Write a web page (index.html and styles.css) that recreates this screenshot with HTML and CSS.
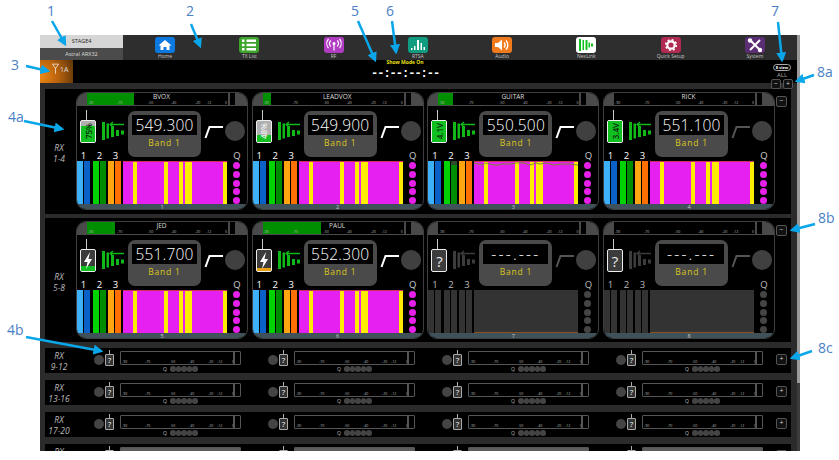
FILE: index.html
```html
<!DOCTYPE html>
<html lang="en">

<head>
    <meta charset="UTF-8">
    <title>Wireless Workbench receivers</title>
    <link rel="stylesheet" href="styles.css">
</head>

<body>
    <svg class="sprite" xmlns="http://www.w3.org/2000/svg">
        <symbol id="rf" viewBox="0 0 22 20">
            <path d="M0 1h3v18H0zM4.500 2.500h2.500v15H4.500zM9 5h3v11H9zM14 9h3v6h-3zM19 9.500h3v4h-3z" fill="currentColor" />
            <path d="M8 3.500h14M11 1 8 3.500 11 6" fill="none" stroke="currentColor" stroke-width="1.300" />
        </symbol>
        <symbol id="squelch" viewBox="0 0 20 14">
            <path d="M1.500 13 5.500 2H19" fill="none" stroke="currentColor" stroke-width="2" />
        </symbol>
        <symbol id="bolt" viewBox="0 0 14 21">
            <path d="M9 2 3 12h3.500L5 19l6-10H7.500z" fill="#fff" />
        </symbol>
    </svg>

    <div class="app">
        <div class="app-main">
            <header class="topbar">
                <div class="device-name">
                    <div class="stage">STAGE4</div>
                    <div class="model">Astral ARX32</div>
                </div>
                <nav class="nav">
                    <a class="nav-item">
                        <svg class="nav-icon home" viewBox="0 0 20 16"><path d="M10 3l6.500 5.500H14.500V13H11.500V10H8.500V13H5.500V8.500H3.500z" fill="#fff" /></svg>
                        <span>Home</span>
                    </a>
                    <a class="nav-item">
                        <svg class="nav-icon txlist" viewBox="0 0 20 16"><path d="M3 2.500h2.500v2.500H3zM3 6.800h2.500v2.500H3zM3 11h2.500v2.500H3zM7.500 2.500H17v2.500H7.500zM7.500 6.800H17v2.500H7.500zM7.500 11H17v2.500H7.500z" fill="#fff" /></svg>
                        <span>TX List</span>
                    </a>
                    <a class="nav-item">
                        <svg class="nav-icon rf-tab" viewBox="0 0 20 16"><circle cx="10" cy="6.500" r="1.500" fill="#fff" /><path d="M10 7v6.500M6.800 3.500a4.500 4.500 0 0 0 0 6M13.200 3.500a4.500 4.500 0 0 1 0 6M4.500 2a7 7 0 0 0 0 9M15.500 2a7 7 0 0 1 0 9" fill="none" stroke="#fff" stroke-width="1.200" /></svg>
                        <span>RF</span>
                    </a>
                    <a class="nav-item">
                        <svg class="nav-icon rtsa" viewBox="0 0 20 16"><path d="M3 13h1.500v-2H3zM6 13h1.500V9H6zM9 13h2V3H9zM12.500 13H14V6h-1.500zM15.500 13H17v-3h-1.500z" fill="#fff" /></svg>
                        <span>RTSA</span>
                    </a>
                    <a class="nav-item">
                        <svg class="nav-icon audio" viewBox="0 0 20 16"><path d="M3 6h3l4-3.500v11L6 10H3z" fill="#fff" /><path d="M12 5.500a3.500 3.500 0 0 1 0 5M14 3.500a6.500 6.500 0 0 1 0 9" fill="none" stroke="#fff" stroke-width="1.400" /></svg>
                        <span>Audio</span>
                    </a>
                    <a class="nav-item">
                        <svg class="nav-icon nexlink" viewBox="0 0 20 16"><path d="M3 2h2v12H3zM6.500 3h1.500v10H6.500zM9.500 3h2v10h-2zM12.500 5.500H14v5h-1.500zM15 6.500h2v3h-2z" fill="#12c01e" /></svg>
                        <span>NexLink</span>
                    </a>
                    <a class="nav-item">
                        <svg class="nav-icon setup" viewBox="0 0 20 16"><circle cx="10" cy="8" r="3.700" fill="none" stroke="#fff" stroke-width="2.200" /><circle cx="10" cy="8" r="5.300" fill="none" stroke="#fff" stroke-width="1.600" stroke-dasharray="2 2.160" /></svg>
                        <span>Quick Setup</span>
                    </a>
                    <a class="nav-item">
                        <svg class="nav-icon system" viewBox="0 0 20 16"><path d="M5 3l10 10M15 3 5 13" fill="none" stroke="#fff" stroke-width="2" /><circle cx="5" cy="3.500" r="2.200" fill="#fff" /><circle cx="15" cy="13" r="2.200" fill="#fff" /></svg>
                        <span>System</span>
                    </a>
                </nav>
            </header>

            <div class="statusbar">
                <div class="filter">
                    <svg class="filter-icon" viewBox="0 0 8 12"><path d="M.5 1h7L4 6zM4 6v6" fill="none" stroke="#fff" stroke-width=".8" /></svg>
                    <span>1A</span>
                </div>
                <div class="clock-box">
                    <div class="show-mode">Show Mode On</div>
                    <div class="clock">--:--:--:--</div>
                </div>
                <div class="view-box">
                    <div class="view-pill">8 view</div>
                    <div class="view-all">ALL</div>
                </div>
                <div class="zoom-btns">
                    <div class="toggle">&minus;</div>
                    <div class="toggle">+</div>
                </div>
            </div>

            <main class="content">
                <section class="group">
                    <div class="rx-label">RX<br>1-4</div>
                    <div class="cards">
                        <article class="card">
                            <div class="head">
                                <div class="meter"><div class="level" style="width: 47px"></div><div class="name">BVOX</div><div class="scale"><span>-90</span><span>-70</span><span>-50</span><span>-40</span><span>-20</span><span>-12</span><span>0</span></div></div>
                                <div class="peak"></div>
                            </div>
                            <div class="top">
                                <div class="dev"><div class="fill" style="height: 75%"></div><span class="dev-text">75%</span></div>
                                <svg class="rf on"><use href="#rf" /></svg>
                                <div class="freq"><div class="mhz">549.300</div><div class="band">Band 1</div></div>
                                <svg class="sq"><use href="#squelch" /></svg>
                                <div class="knob"></div>
                            </div>
                            <div class="labels"><span>1</span><span>2</span><span>3</span><span class="q">Q</span></div>
                            <div class="chans">
                                <div class="bar sky"></div><div class="bar blue"></div>
                                <div class="bar lime second"></div><div class="bar green"></div>
                                <div class="bar amber third"></div><div class="bar orange"></div>
                                <div class="mag"></div>
                                <div class="dots"><i></i><i></i><i></i><i></i><i></i></div>
                            </div>
                            <div class="foot">1</div>
                        </article>
                        <article class="card">
                            <div class="head">
                                <div class="meter"><div class="level" style="width: 8px"></div><div class="name">LEADVOX</div><div class="scale"><span>-90</span><span>-70</span><span>-50</span><span>-40</span><span>-20</span><span>-12</span><span>0</span></div></div>
                                <div class="peak"></div>
                            </div>
                            <div class="top">
                                <div class="dev"><div class="fill" style="height: 35%"></div><span class="dev-text pale">48%</span></div>
                                <svg class="rf on"><use href="#rf" /></svg>
                                <div class="freq"><div class="mhz">549.900</div><div class="band">Band 1</div></div>
                                <svg class="sq"><use href="#squelch" /></svg>
                                <div class="knob"></div>
                            </div>
                            <div class="labels"><span>1</span><span>2</span><span>3</span><span class="q">Q</span></div>
                            <div class="chans">
                                <div class="bar sky"></div><div class="bar blue"></div>
                                <div class="bar lime second"></div><div class="bar green"></div>
                                <div class="bar amber third"></div><div class="bar orange"></div>
                                <div class="mag"></div>
                                <div class="dots"><i></i><i></i><i></i><i></i><i></i></div>
                            </div>
                            <div class="foot">2</div>
                        </article>
                        <article class="card">
                            <div class="head">
                                <div class="meter"><div class="level" style="width: 15px"></div><div class="name">GUITAR</div><div class="scale"><span>-90</span><span>-70</span><span>-50</span><span>-40</span><span>-20</span><span>-12</span><span>0</span></div></div>
                                <div class="peak"></div>
                            </div>
                            <div class="top">
                                <div class="dev"><div class="fill" style="height: 100%"></div><span class="dev-text">4.1V</span></div>
                                <svg class="rf on"><use href="#rf" /></svg>
                                <div class="freq"><div class="mhz">550.500</div><div class="band">Band 1</div></div>
                                <svg class="sq"><use href="#squelch" /></svg>
                                <div class="knob"></div>
                            </div>
                            <div class="labels"><span>1</span><span>2</span><span>3</span><span class="q">Q</span></div>
                            <div class="chans">
                                <div class="bar sky"></div><div class="bar blue"></div>
                                <div class="bar lime second"></div><div class="bar green capped"></div>
                                <div class="bar amber third"></div><div class="bar orange"></div>
                                <div class="mag">
                                    <svg class="trace" viewBox="0 0 104 5"><polyline points="0,1 4,2 8,3 12,1 16,2 20,3 24,3 28,2 36,2 42,1 50,1 56,3 62,1 66,2 72,1 80,3 88,2 96,2 104,3" fill="none" stroke="#7d8a2a" stroke-width="1" /></svg>
                                </div>
                                <div class="dots"><i></i><i></i><i></i><i></i><i></i></div>
                            </div>
                            <div class="foot">3</div>
                        </article>
                        <article class="card">
                            <div class="head">
                                <div class="meter"><div class="name">RICK</div><div class="scale"><span>-90</span><span>-70</span><span>-50</span><span>-40</span><span>-20</span><span>-12</span><span>0</span></div></div>
                                <div class="peak"></div>
                            </div>
                            <div class="top">
                                <div class="dev"><div class="fill" style="height: 100%"></div><span class="dev-text">3.4V</span></div>
                                <svg class="rf on"><use href="#rf" /></svg>
                                <div class="freq"><div class="mhz">551.100</div><div class="band">Band 1</div></div>
                                <svg class="sq dim"><use href="#squelch" /></svg>
                                <div class="knob"></div>
                            </div>
                            <div class="labels"><span>1</span><span>2</span><span>3</span><span class="q">Q</span></div>
                            <div class="chans">
                                <div class="bar sky"></div><div class="bar blue"></div>
                                <div class="bar lime second"></div><div class="bar green"></div>
                                <div class="bar amber third"></div><div class="bar orange"></div>
                                <div class="mag"></div>
                                <div class="dots"><i></i><i></i><i></i><i></i><i></i></div>
                            </div>
                            <div class="foot">4</div>
                        </article>
                    </div>
                    <div class="toggle side">&minus;</div>
                </section>

                <section class="group short">
                    <div class="rx-label">RX<br>5-8</div>
                    <div class="cards">
                        <article class="card">
                            <div class="head">
                                <div class="meter"><div class="level" style="width: 28px"></div><div class="name">JED</div><div class="scale"><span>-90</span><span>-70</span><span>-50</span><span>-40</span><span>-20</span><span>-12</span><span>0</span></div></div>
                                <div class="peak"></div>
                            </div>
                            <div class="top">
                                <div class="dev dark"><div class="fill" style="height: 22%"></div><svg class="bolt"><use href="#bolt" /></svg></div>
                                <svg class="rf on"><use href="#rf" /></svg>
                                <div class="freq"><div class="mhz">551.700</div><div class="band">Band 1</div></div>
                                <svg class="sq"><use href="#squelch" /></svg>
                                <div class="knob"></div>
                            </div>
                            <div class="labels"><span>1</span><span>2</span><span>3</span><span class="q">Q</span></div>
                            <div class="chans">
                                <div class="bar sky"></div><div class="bar blue"></div>
                                <div class="bar lime second"></div><div class="bar green"></div>
                                <div class="bar amber third"></div><div class="bar orange"></div>
                                <div class="mag"></div>
                                <div class="dots"><i></i><i></i><i></i><i></i><i></i></div>
                            </div>
                            <div class="foot">5</div>
                        </article>
                        <article class="card">
                            <div class="head">
                                <div class="meter"><div class="level" style="width: 58px"></div><div class="name">PAUL</div><div class="scale"><span>-90</span><span>-70</span><span>-50</span><span>-40</span><span>-20</span><span>-12</span><span>0</span></div></div>
                                <div class="peak"></div>
                            </div>
                            <div class="top">
                                <div class="dev dark"><div class="fill low" style="height: 12%"></div><svg class="bolt"><use href="#bolt" /></svg></div>
                                <svg class="rf on"><use href="#rf" /></svg>
                                <div class="freq"><div class="mhz">552.300</div><div class="band">Band 1</div></div>
                                <svg class="sq"><use href="#squelch" /></svg>
                                <div class="knob"></div>
                            </div>
                            <div class="labels"><span>1</span><span>2</span><span>3</span><span class="q">Q</span></div>
                            <div class="chans">
                                <div class="bar sky"></div><div class="bar blue"></div>
                                <div class="bar lime second"></div><div class="bar green"></div>
                                <div class="bar amber third"></div><div class="bar orange"></div>
                                <div class="mag"></div>
                                <div class="dots"><i></i><i></i><i></i><i></i><i></i></div>
                            </div>
                            <div class="foot">6</div>
                        </article>
                        <article class="card idle">
                            <div class="head">
                                <div class="meter"><div class="name">&nbsp;</div><div class="scale"><span>-90</span><span>-70</span><span>-50</span><span>-40</span><span>-20</span><span>-12</span><span>0</span></div></div>
                                <div class="peak"></div>
                            </div>
                            <div class="top">
                                <div class="dev dark"><span class="unknown">?</span></div>
                                <svg class="rf"><use href="#rf" /></svg>
                                <div class="freq"><div class="mhz dashes">---.---</div><div class="band">Band 1</div></div>
                                <svg class="sq dim"><use href="#squelch" /></svg>
                                <div class="knob"></div>
                            </div>
                            <div class="labels"><span>1</span><span>2</span><span>3</span><span class="q">Q</span></div>
                            <div class="chans">
                                <div class="bar"></div><div class="bar"></div>
                                <div class="bar second"></div><div class="bar"></div>
                                <div class="bar third"></div><div class="bar"></div>
                                <div class="mag"></div>
                                <div class="dots"><i></i><i></i><i></i><i></i><i></i></div>
                            </div>
                            <div class="foot">7</div>
                        </article>
                        <article class="card idle">
                            <div class="head">
                                <div class="meter"><div class="name">&nbsp;</div><div class="scale"><span>-90</span><span>-70</span><span>-50</span><span>-40</span><span>-20</span><span>-12</span><span>0</span></div></div>
                                <div class="peak"></div>
                            </div>
                            <div class="top">
                                <div class="dev dark"><span class="unknown">?</span></div>
                                <svg class="rf"><use href="#rf" /></svg>
                                <div class="freq"><div class="mhz dashes">---.---</div><div class="band">Band 1</div></div>
                                <svg class="sq dim"><use href="#squelch" /></svg>
                                <div class="knob"></div>
                            </div>
                            <div class="labels"><span>1</span><span>2</span><span>3</span><span class="q">Q</span></div>
                            <div class="chans">
                                <div class="bar"></div><div class="bar"></div>
                                <div class="bar second"></div><div class="bar"></div>
                                <div class="bar third"></div><div class="bar"></div>
                                <div class="mag"></div>
                                <div class="dots"><i></i><i></i><i></i><i></i><i></i></div>
                            </div>
                            <div class="foot">8</div>
                        </article>
                    </div>
                    <div class="toggle side">&minus;</div>
                </section>

                <section class="row">
                    <div class="rx-label">RX<br>9-12</div>
                    <div class="units">
                        <div class="unit"><div class="knob-s"></div><div class="dev-s">?</div><div class="unit-col"><div class="meter-s"><div class="scale"><span>-90</span><span>-70</span><span>-50</span><span>-40</span><span>-20</span><span>-12</span><span>0</span></div></div><div class="q-row">Q<i></i><i></i><i></i><i></i><i></i></div></div></div>
                        <div class="unit"><div class="knob-s"></div><div class="dev-s">?</div><div class="unit-col"><div class="meter-s"><div class="scale"><span>-90</span><span>-70</span><span>-50</span><span>-40</span><span>-20</span><span>-12</span><span>0</span></div></div><div class="q-row">Q<i></i><i></i><i></i><i></i><i></i></div></div></div>
                        <div class="unit"><div class="knob-s"></div><div class="dev-s">?</div><div class="unit-col"><div class="meter-s"><div class="scale"><span>-90</span><span>-70</span><span>-50</span><span>-40</span><span>-20</span><span>-12</span><span>0</span></div></div><div class="q-row">Q<i></i><i></i><i></i><i></i><i></i></div></div></div>
                        <div class="unit"><div class="knob-s"></div><div class="dev-s">?</div><div class="unit-col"><div class="meter-s"><div class="scale"><span>-90</span><span>-70</span><span>-50</span><span>-40</span><span>-20</span><span>-12</span><span>0</span></div></div><div class="q-row">Q<i></i><i></i><i></i><i></i><i></i></div></div></div>
                    </div>
                    <div class="toggle plus">+</div>
                </section>

                <section class="row">
                    <div class="rx-label">RX<br>13-16</div>
                    <div class="units">
                        <div class="unit"><div class="knob-s"></div><div class="dev-s">?</div><div class="unit-col"><div class="meter-s"><div class="scale"><span>-90</span><span>-70</span><span>-50</span><span>-40</span><span>-20</span><span>-12</span><span>0</span></div></div><div class="q-row">Q<i></i><i></i><i></i><i></i><i></i></div></div></div>
                        <div class="unit"><div class="knob-s"></div><div class="dev-s">?</div><div class="unit-col"><div class="meter-s"><div class="scale"><span>-90</span><span>-70</span><span>-50</span><span>-40</span><span>-20</span><span>-12</span><span>0</span></div></div><div class="q-row">Q<i></i><i></i><i></i><i></i><i></i></div></div></div>
                        <div class="unit"><div class="knob-s"></div><div class="dev-s">?</div><div class="unit-col"><div class="meter-s"><div class="scale"><span>-90</span><span>-70</span><span>-50</span><span>-40</span><span>-20</span><span>-12</span><span>0</span></div></div><div class="q-row">Q<i></i><i></i><i></i><i></i><i></i></div></div></div>
                        <div class="unit"><div class="knob-s"></div><div class="dev-s">?</div><div class="unit-col"><div class="meter-s"><div class="scale"><span>-90</span><span>-70</span><span>-50</span><span>-40</span><span>-20</span><span>-12</span><span>0</span></div></div><div class="q-row">Q<i></i><i></i><i></i><i></i><i></i></div></div></div>
                    </div>
                    <div class="toggle plus">+</div>
                </section>

                <section class="row">
                    <div class="rx-label">RX<br>17-20</div>
                    <div class="units">
                        <div class="unit"><div class="knob-s"></div><div class="dev-s">?</div><div class="unit-col"><div class="meter-s"><div class="scale"><span>-90</span><span>-70</span><span>-50</span><span>-40</span><span>-20</span><span>-12</span><span>0</span></div></div><div class="q-row">Q<i></i><i></i><i></i><i></i><i></i></div></div></div>
                        <div class="unit"><div class="knob-s"></div><div class="dev-s">?</div><div class="unit-col"><div class="meter-s"><div class="scale"><span>-90</span><span>-70</span><span>-50</span><span>-40</span><span>-20</span><span>-12</span><span>0</span></div></div><div class="q-row">Q<i></i><i></i><i></i><i></i><i></i></div></div></div>
                        <div class="unit"><div class="knob-s"></div><div class="dev-s">?</div><div class="unit-col"><div class="meter-s"><div class="scale"><span>-90</span><span>-70</span><span>-50</span><span>-40</span><span>-20</span><span>-12</span><span>0</span></div></div><div class="q-row">Q<i></i><i></i><i></i><i></i><i></i></div></div></div>
                        <div class="unit"><div class="knob-s"></div><div class="dev-s">?</div><div class="unit-col"><div class="meter-s"><div class="scale"><span>-90</span><span>-70</span><span>-50</span><span>-40</span><span>-20</span><span>-12</span><span>0</span></div></div><div class="q-row">Q<i></i><i></i><i></i><i></i><i></i></div></div></div>
                    </div>
                    <div class="toggle plus">+</div>
                </section>

                <section class="row">
                    <div class="rx-label last">RX</div>
                    <div class="units">
                        <div class="unit"><div class="knob-s"></div><div class="dev-s"></div><div class="unit-col"><div class="meter-s blank"></div></div></div>
                        <div class="unit"><div class="knob-s"></div><div class="dev-s"></div><div class="unit-col"><div class="meter-s blank"></div></div></div>
                        <div class="unit"><div class="knob-s"></div><div class="dev-s"></div><div class="unit-col"><div class="meter-s blank"></div></div></div>
                        <div class="unit"><div class="knob-s"></div><div class="dev-s"></div><div class="unit-col"><div class="meter-s blank"></div></div></div>
                    </div>
                    <div class="toggle plus"></div>
                </section>
            </main>
        </div>
        <div class="scrollbar"><div class="thumb"></div></div>
    </div>

    <!-- callouts drawn over the screenshot -->
    <svg class="arrows" viewBox="0 0 839 460">
        <defs>
            <marker id="head" markerWidth="4" markerHeight="4" refX="3" refY="2" orient="auto">
                <path d="M0 0 4 2 0 4z" fill="#0aa6ea" />
            </marker>
        </defs>
        <g fill="none" stroke="#0aa6ea" stroke-width="2.500" marker-end="url(#head)">
            <path d="M52 21 65 44" />
            <path d="M191 24 200 46" />
            <path d="M26 66 48 71" />
            <path d="M24 121 62 129" />
            <path d="M26 337 101 351" />
            <path d="M358 21 375 60" />
            <path d="M392 21 396 52" />
            <path d="M778 22 782 60" />
            <path d="M814 75 797 81" />
            <path d="M815 224 792 230" />
            <path d="M812 351 792 358" />
        </g>
    </svg>
    <span class="note n1">1</span>
    <span class="note n2">2</span>
    <span class="note n3">3</span>
    <span class="note n4a">4a</span>
    <span class="note n4b">4b</span>
    <span class="note n5">5</span>
    <span class="note n6">6</span>
    <span class="note n7">7</span>
    <span class="note n8a">8a</span>
    <span class="note n8b">8b</span>
    <span class="note n8c">8c</span>
</body>

</html>
```

FILE: styles.css
```css
* {
    box-sizing: border-box;
}

body {
    margin: 0;
    padding: 35px 0 0 40px;
    height: 460px;
    overflow: hidden;
    background: #fff;
    font-family: "Open Sans", sans-serif;
    color: #fff;
}

.sprite {
    display: none;
}

.app {
    display: flex;
    width: 760px;
    height: 416px;
    overflow: hidden;
    background: #2b2b2b;
}

.app-main {
    width: 757px;
}

.scrollbar {
    width: 3px;
    background: #3c3c3c;
}

.thumb {
    height: 348px;
    background: #9a9a9a;
}

/* top bar */
.topbar {
    display: flex;
    height: 25px;
    background: #2e2e2e;
}

.device-name {
    width: 83px;
    font-size: 5.500px;
    text-align: center;
}

.stage {
    height: 13px;
    line-height: 13px;
    background: #d6d6d6;
    color: #222;
}

.model {
    height: 12px;
    line-height: 12px;
    background: #4b4b4b;
    color: #ddd;
}

.nav {
    display: flex;
    flex: 1;
}

.nav-item {
    flex: 1;
    display: flex;
    flex-direction: column;
    align-items: center;
    padding-top: 2px;
    font-size: 5px;
    line-height: 7px;
    color: #c4c4c4;
}

.nav-icon {
    display: block;
    width: 20px;
    height: 16px;
    border-radius: 3px;
}

.home { background: #0b79e0; }
.txlist { background: #3ea52c; }
.rf-tab { background: #b03cc2; }
.rtsa { background: #109c80; }
.audio { background: #f07a1e; }
.nexlink { background: #fff; }
.setup { background: #b02a52; }
.system { background: #5b2d73; }

/* status bar */
.statusbar {
    position: relative;
    display: flex;
    height: 23px;
    background: #000;
}

.filter {
    display: flex;
    align-items: flex-start;
    gap: 1px;
    width: 33px;
    padding: 3px 0 0 12px;
    background: radial-gradient(circle at 0 70%, #f08a12, #b8620e 50%, #5c3408 100%);
    font-size: 7px;
    line-height: 14px;
    color: #ddd;
}

.filter-icon {
    width: 7px;
    height: 11px;
    flex: none;
}

.clock-box {
    width: 68px;
    margin-left: 298px;
    text-align: center;
}

.show-mode {
    height: 7px;
    margin-top: -1px;
    font-size: 5px;
    line-height: 7px;
    font-weight: 700;
    color: #e8e010;
    white-space: nowrap;
}

.clock {
    font-family: "Liberation Mono", monospace;
    font-size: 12px;
    font-weight: 700;
    line-height: 17px;
    letter-spacing: -1px;
    white-space: nowrap;
}

.view-box {
    margin-left: auto;
    margin-right: 6px;
    width: 18px;
    padding-top: 4px;
    text-align: center;
}

.view-pill {
    height: 7px;
    border: 1px solid #aaa;
    border-radius: 4px;
    font-size: 4px;
    font-weight: 700;
    line-height: 5px;
    white-space: nowrap;
}

.view-all {
    font-size: 6px;
    line-height: 9px;
    color: #aaa;
}

.zoom-btns {
    position: absolute;
    right: 4px;
    top: 19px;
    display: flex;
    gap: 2px;
}

.toggle {
    flex: none;
    width: 10px;
    height: 10px;
    border: 1px solid #555;
    border-radius: 2px;
    background: #111;
    font-size: 7px;
    line-height: 8px;
    text-align: center;
    color: #ccc;
}

/* receiver groups */
.content {
    padding: 6px 6px 0 5px;
}

.group {
    display: flex;
    align-items: flex-start;
    height: 125px;
    padding-top: 3px;
    margin-bottom: 4px;
    background: #000;
}

.group.short {
    height: 124px;
    margin-bottom: 6px;
}

.rx-label {
    flex: none;
    width: 28px;
    margin-right: 3px;
    align-self: center;
    font-size: 8.500px;
    font-style: italic;
    line-height: 11px;
    text-align: center;
    color: #bbb;
}

.cards {
    display: flex;
    gap: 3.700px;
}

.toggle.side {
    width: 11px;
    height: 11px;
    margin: 4px 0 0 1px;
}

.card {
    width: 172px;
    height: 118px;
    overflow: hidden;
    border: 1px solid #3e3e3e;
    border-radius: 10px;
    background: #000;
}

.head {
    display: flex;
    height: 13px;
    padding-left: 10px;
    gap: 2px;
    background: #4a4a4a;
}

.meter {
    position: relative;
    width: 141px;
    height: 12px;
    background: #000;
}

.level {
    position: absolute;
    left: 0;
    top: 0;
    bottom: 0;
    background: #008f00;
}

.name {
    position: relative;
    height: 8px;
    padding-left: 8px;
    font-size: 6.500px;
    line-height: 8px;
    text-align: center;
    color: #ddd;
}

.scale {
    position: relative;
    display: grid;
    grid-template-columns: 29px 31px 23px 24px 11px 19px 1fr;
    padding-left: 1px;
    font-size: 3.500px;
    line-height: 4px;
    color: #bbb;
}

.peak {
    width: 5px;
    height: 12px;
    background: #000;
}

.top {
    display: flex;
    align-items: flex-start;
    height: 44px;
}

.dev {
    position: relative;
    display: flex;
    align-items: center;
    justify-content: center;
    width: 16px;
    height: 23px;
    margin: 14px 0 0 3px;
    overflow: visible;
    border: 1px solid #eee;
    border-radius: 2px;
    background: #b0b0b0;
}

.dev::before {
    content: "";
    position: absolute;
    left: 5px;
    top: -11px;
    width: 1px;
    height: 10px;
    background: #ccc;
}

.dev.dark {
    background: #3c3c3c;
}

.fill {
    position: absolute;
    left: 0;
    right: 0;
    bottom: 0;
    background: #10c020;
}

.fill.low {
    background: #e8a010;
}

.dev-text {
    position: relative;
    writing-mode: vertical-rl;
    transform: rotate(180deg);
    font-size: 8px;
    font-weight: 600;
    line-height: 9px;
    color: #0c2c0c;
}

.dev-text.pale {
    color: #eee;
}

.bolt {
    position: relative;
    width: 14px;
    height: 21px;
}

.unknown {
    font-size: 15px;
    line-height: 20px;
    color: #eee;
}

.rf {
    flex: none;
    width: 22px;
    height: 20px;
    margin: 15px 0 0 6px;
    color: #3c3c3c;
}

.rf.on {
    color: #10b818;
}

.freq {
    flex: none;
    width: 73px;
    height: 46px;
    margin: 5px 0 0 4px;
    padding: 4px 4px 0;
    border-radius: 7px;
    background: #4a4a4a;
    text-align: center;
}

.mhz {
    height: 20px;
    background: #000;
    font-size: 15.500px;
    font-weight: 300;
    line-height: 20px;
    letter-spacing: .2px;
    white-space: nowrap;
}

.mhz.dashes {
    letter-spacing: 2.200px;
}

.band {
    font-size: 8.500px;
    line-height: 16px;
    letter-spacing: .8px;
    color: #dcc820;
}

.sq {
    flex: none;
    width: 20px;
    height: 14px;
    margin: 19px 0 0 3px;
    color: #fff;
}

.sq.dim {
    color: #555;
}

.knob {
    flex: none;
    width: 20px;
    height: 20px;
    margin: 15px 0 0 1px;
    border-radius: 50%;
    background: #404040;
}

.labels {
    display: flex;
    height: 11px;
    font-size: 9.500px;
    line-height: 12px;
    text-align: center;
}

.labels span {
    width: 13px;
    margin-right: 3px;
}

.labels .q {
    margin: 0 0 0 106px;
    width: 12px;
    color: #ccc;
}

.chans {
    display: flex;
    height: 43px;
}

.bar {
    width: 6px;
    margin-right: 1px;
    background: #333;
}

.bar.second {
    margin-left: 2px;
}

.bar.third {
    margin-left: 1px;
}

.sky { background: #3cb0f8; }
.blue { background: #0a62c8; }
.lime { background: #00d400; }
.green { background: #008c00; }
.amber { background: #ffa510; }
.orange { background: #ff7000; }

.green.capped {
    border-top: 4px solid #2e4a2e;
}

.mag {
    position: relative;
    width: 104px;
    margin-left: 1px;
    border-top: 1px solid #d03060;
    background-color: #e620f0;
    background-image: linear-gradient(to right,
            transparent 10px, #ffec00 10px, #ffec00 14px, transparent 14px,
            transparent 41px, #ffec00 41px, #ffec00 45px, transparent 45px,
            transparent 56px, #ffec00 56px, #ffec00 60px, transparent 60px,
            transparent 62px, #ffec00 62px, #ffec00 69px, transparent 69px,
            transparent 100px, #ffec00 100px);
}

.trace {
    position: absolute;
    left: 0;
    top: 0;
    width: 104px;
    height: 5px;
}

.dots {
    display: flex;
    flex-direction: column;
    justify-content: space-between;
    margin-left: 6px;
    padding-top: 1px;
}

.dots i {
    display: block;
    width: 7px;
    height: 7px;
    border-radius: 50%;
    background: #e620e8;
}

.foot {
    height: 7px;
    background: #3f5159;
    font-size: 5.500px;
    line-height: 7px;
    text-align: center;
    color: #ccc;
}

.idle .mag {
    border-top: 0;
    border-bottom: 1px solid #8a5020;
    background: #333;
}

.idle .dots i {
    background: #444;
}

.idle .labels span {
    color: #bbb;
}

/* collapsed rows */
.row {
    display: flex;
    align-items: flex-start;
    height: 25px;
    margin-bottom: 7px;
    background: #000;
}

.row .rx-label {
    margin-right: 21px;
}

.row .rx-label.last {
    align-self: flex-start;
    margin-top: 2px;
}

.units {
    display: flex;
    gap: 27px;
}

.unit {
    display: flex;
    align-items: flex-start;
    width: 147px;
}

.knob-s {
    flex: none;
    width: 10px;
    height: 10px;
    margin: 7px 1px 0 0;
    border-radius: 50%;
    background: #444;
}

.dev-s {
    position: relative;
    flex: none;
    width: 9px;
    height: 12px;
    margin: 6px 6px 0 0;
    border: 1px solid #aaa;
    border-radius: 1px;
    background: #333;
    font-size: 8px;
    line-height: 10px;
    text-align: center;
}

.dev-s::before {
    content: "";
    position: absolute;
    left: 2px;
    top: -5px;
    width: 3px;
    height: 4px;
    background: linear-gradient(to right, transparent 1px, #aaa 1px, #aaa 2px, transparent 2px);
}

.unit-col {
    width: 121px;
    margin-top: 3px;
}

.meter-s {
    position: relative;
    height: 14px;
    padding-top: 8px;
    border: 1px solid #555;
    border-radius: 1px;
    background: #000;
}

.meter-s::after {
    content: "";
    position: absolute;
    top: 0;
    right: 0;
    bottom: 0;
    width: 5px;
    border-left: 2px solid #555;
}

.meter-s .scale {
    grid-template-columns: 23px 25px 19px 19px 9px 15px 1fr;
}

.meter-s.blank {
    background: #5c5c5c;
}

.meter-s.blank::after {
    display: none;
}

.q-row {
    display: flex;
    justify-content: center;
    align-items: center;
    height: 8px;
    font-size: 5px;
    color: #bbb;
}

.q-row i {
    display: block;
    width: 5.600px;
    height: 5.600px;
    border-radius: 50%;
    background: #444;
}

.q-row i:first-of-type {
    margin-left: 3px;
}

.toggle.plus {
    width: 11px;
    height: 11px;
    margin: 6px 0 0 13px;
}

/* callouts */
.arrows {
    position: absolute;
    left: 0;
    top: 0;
    width: 839px;
    height: 460px;
    pointer-events: none;
}

.note {
    position: absolute;
    font-family: "Open Sans", sans-serif;
    font-size: 14px;
    line-height: 16px;
    color: #4a80c4;
}

.n1 { left: 47px; top: 3px; }
.n2 { left: 186px; top: 3px; }
.n3 { left: 11px; top: 57px; }
.n4a { left: 8px; top: 109px; }
.n4b { left: 7px; top: 322px; }
.n5 { left: 351px; top: 3px; }
.n6 { left: 386px; top: 3px; }
.n7 { left: 771px; top: 3px; }
.n8a { left: 817px; top: 64px; }
.n8b { left: 818px; top: 210px; }
.n8c { left: 818px; top: 340px; }
```
